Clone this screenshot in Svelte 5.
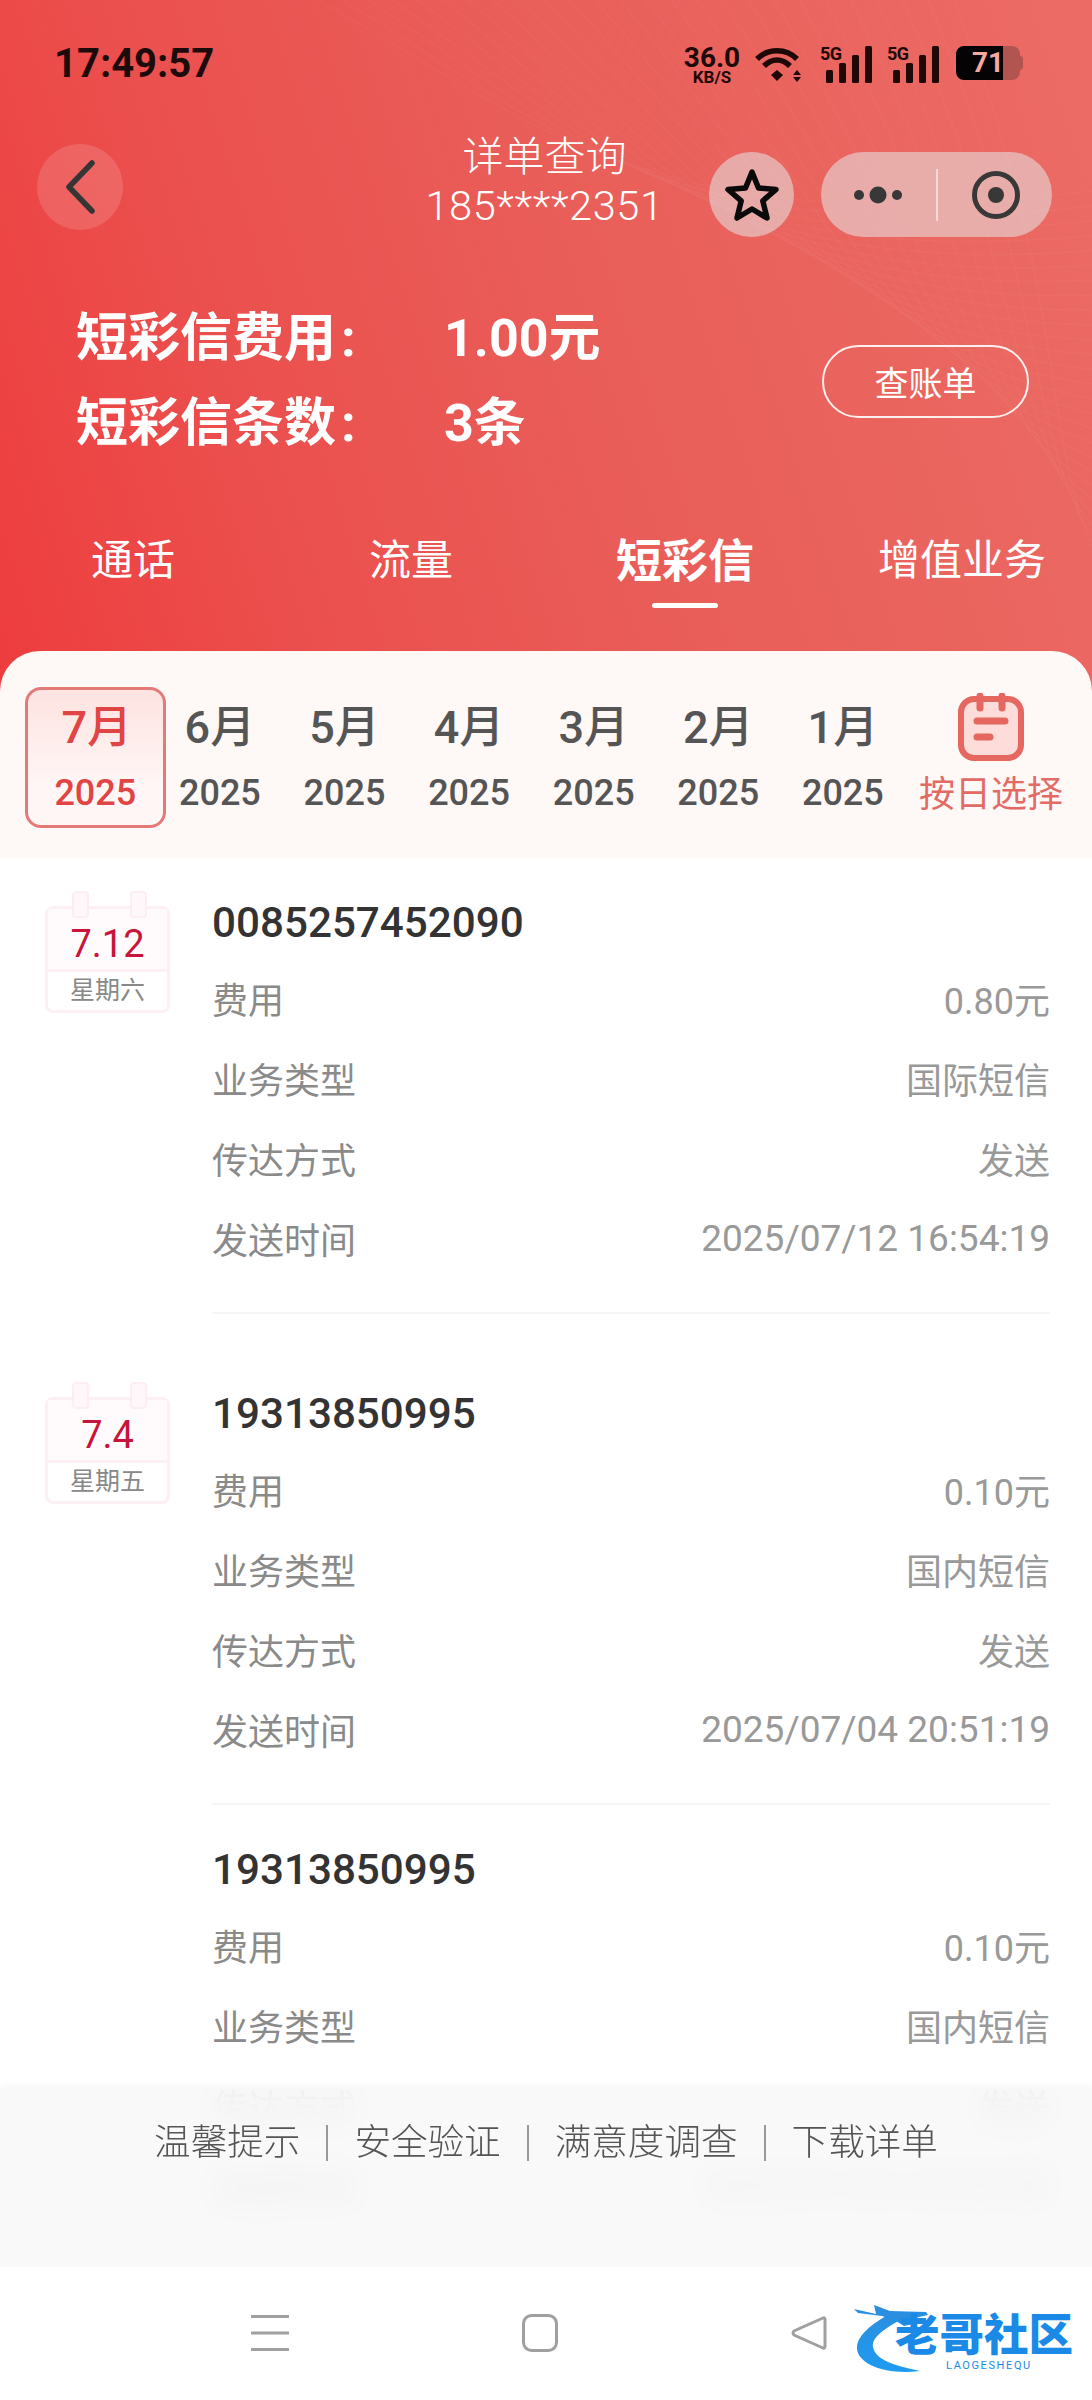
<script>
  const tabs = ['通话', '流量', '短彩信', '增值业务'];
  const months = ['7月', '6月', '5月', '4月', '3月', '2月', '1月'];
  const records = [
    { date: '7.12', week: '星期六', no: '0085257452090', fee: '0.80元', type: '国际短信', time: '2025/07/12 16:54:19', cls: 'first' },
    { date: '7.4', week: '星期五', no: '19313850995', fee: '0.10元', type: '国内短信', time: '2025/07/04 20:51:19', cls: 'second' },
    { no: '19313850995', fee: '0.10元', type: '国内短信', time: '2025/07/04 20:50:58', cls: 'third' }
  ];
  const links = ['温馨提示', '安全验证', '满意度调查', '下载详单'];
  const waves = Array.from({ length: 26 }, (_, i) => i);
</script>

<div class="page">
  <header class="hero">
    <svg class="waves" viewBox="0 0 1092 700" preserveAspectRatio="none" aria-hidden="true">
      {#each waves as i}
        <path d={`M${300 + i * 26} -10 C ${520 + i * 22} ${110 + i * 7}, ${640 + i * 16} ${250 + i * 8}, 1100 ${190 + i * 15}`} />
      {/each}
    </svg>

    <div class="status">
      <span class="clock">17:49:57</span>
      <div class="status-icons">
        <div class="speed"><b>36.0</b><small>KB/S</small></div>
        <svg class="wifi" viewBox="0 0 50 36" aria-hidden="true">
          <path d="M2 13 C13 2 31 2 42 13" />
          <path d="M9 20 C17 12 27 12 35 20" />
          <path d="M22 24 l6 5 l-6 6 l-6 -6 z" class="solid" />
          <path d="M42 24 l4 5 h-8 z M42 36 l4 -5 h-8 z" class="solid" />
        </svg>
        <div class="signal"><i>5G</i><svg viewBox="0 0 46 37" aria-hidden="true"><rect x="0" y="24" width="7" height="13" rx="1.5"/><rect x="13" y="17" width="7" height="20" rx="1.5"/><rect x="26" y="9" width="7" height="28" rx="1.5"/><rect x="39" y="0" width="7" height="37" rx="1.5"/></svg></div>
        <div class="signal"><i>5G</i><svg viewBox="0 0 46 37" aria-hidden="true"><rect x="0" y="24" width="7" height="13" rx="1.5"/><rect x="13" y="17" width="7" height="20" rx="1.5"/><rect x="26" y="9" width="7" height="28" rx="1.5"/><rect x="39" y="0" width="7" height="37" rx="1.5"/></svg></div>
        <div class="battery"><span>71</span></div>
      </div>
    </div>

    <nav class="bar">
      <button class="back" aria-label="返回">
        <svg viewBox="0 0 30 54" aria-hidden="true"><path d="M27 3 L4 27 L27 51" /></svg>
      </button>
      <div class="title">
        <div>详单查询</div>
        <div class="phone">185****2351</div>
      </div>
      <div class="actions">
        <button class="star" aria-label="收藏">
          <svg viewBox="0 0 56 54" aria-hidden="true"><path d="M28 4 L34.5 20 L52 21.5 L38.8 32.8 L43 50 L28 41 L13 50 L17.2 32.8 L4 21.5 L21.5 20 Z" /></svg>
        </button>
        <div class="capsule">
          <svg class="dots" viewBox="0 0 50 20" aria-hidden="true"><circle cx="5" cy="10" r="5"/><circle cx="24" cy="10" r="8.5"/><circle cx="43" cy="10" r="5"/></svg>
          <span class="sep"></span>
          <svg class="target" viewBox="0 0 48 48" aria-hidden="true"><circle cx="24" cy="24" r="21.5" class="ring"/><circle cx="24" cy="24" r="8"/></svg>
        </div>
      </div>
    </nav>

    <section class="summary">
      <div>
        <div class="sum-row"><span>短彩信费用<i>:</i></span><strong>1.00元</strong></div>
        <div class="sum-row"><span>短彩信条数<i>:</i></span><strong>3条</strong></div>
      </div>
      <button class="bill">查账单</button>
    </section>

    <div class="tabs">
      {#each tabs as t, i}
        <div class="tab t{i}" class:active={i === 2}>{t}{#if i === 2}<span class="line"></span>{/if}</div>
      {/each}
    </div>
  </header>

  <section class="strip">
    {#each months as m, i}
      <div class="month" class:on={i === 0}>
        <span class="m">{m}</span>
        <span class="y">2025</span>
      </div>
    {/each}
    <div class="pick">
      <svg viewBox="0 0 66 68" aria-hidden="true">
        <rect x="3" y="6" width="60" height="59" rx="13" class="body" />
        <path d="M22 3 V15 M44 3 V15 M19 28 H47 M19 44 H32" />
      </svg>
      <span>按日选择</span>
    </div>
  </section>

  <main class="main">
    {#each records as r}
      <article class="record {r.cls}">
        <div class="side">
          {#if r.date}
            <div class="cal">
              <span class="pin left"></span><span class="pin right"></span>
              <div class="d">{r.date}</div>
              <div class="w">{r.week}</div>
            </div>
          {/if}
        </div>
        <div class="info">
          <h3>{r.no}</h3>
          <div class="row"><span>费用</span><span class="v">{r.fee}</span></div>
          <div class="row"><span>业务类型</span><span class="v">{r.type}</span></div>
          <div class="row"><span>传达方式</span><span class="v">发送</span></div>
          <div class="row"><span>发送时间</span><span class="v time">{r.time}</span></div>
        </div>
      </article>
    {/each}

    <footer class="foot">
      {#each links as l, i}
        {#if i > 0}<span class="bar-sep"></span>{/if}
        <span>{l}</span>
      {/each}
    </footer>
  </main>

  <div class="sysnav">
    <svg class="s-menu" viewBox="0 0 38 36" aria-hidden="true"><path d="M0 1.5 H38 M0 18 H38 M0 34.5 H38" /></svg>
    <svg class="s-home" viewBox="0 0 36 38" aria-hidden="true"><rect x="1.5" y="1.5" width="33" height="35" rx="8" /></svg>
    <svg class="s-back" viewBox="0 0 36 36" aria-hidden="true"><path d="M32 3 Q34 2 34 5 V31 Q34 34 32 33 L3 20 Q1 18 3 16 Z" /></svg>
    <div class="logo">
      <svg viewBox="0 0 220 68" aria-hidden="true">
        <defs><linearGradient id="lg" x1="0" y1="0" x2="0" y2="1"><stop offset="0" stop-color="#2a8fe0"/><stop offset="1" stop-color="#1e9bf0"/></linearGradient></defs>
        <path d="M34 10 C12 22 2 34 3 44 C5 60 32 70 66 66 C50 62 22 58 19 42 C17 33 30 24 46 15 Z" fill="url(#lg)" />
        <path d="M0 4 L22 9 L20 0 L36 6 L72 7 L74 10 L56 14 L70 17 L50 21 L42 16 L28 11 L4 8 Z" fill="#2a8fe0" />
      </svg>
      <b>老哥社区</b>
      <small>LAOGESHEQU</small>
    </div>
  </div>
</div>

<style>
  :global(body) { margin: 0; background: #fff; }
  .page {
    width: 1092px; height: 2400px; overflow: hidden; position: relative;
    font-family: Roboto, "Noto Sans CJK SC", sans-serif;
  }
  button { border: 0; padding: 0; background: none; font: inherit; color: inherit; }

  .hero {
    height: 700px; position: relative; color: #fff; box-sizing: border-box;
    background: linear-gradient(72deg, #ee3c3d 0%, #eb4f4d 24%, #e95e59 55%, #ec6c65 100%);
  }
  .waves { position: absolute; inset: 0; width: 100%; height: 100%; }
  .waves path { fill: none; stroke: rgba(255,255,255,.03); stroke-width: 1.5; }
  .status, .bar, .summary, .tabs { position: relative; }

  .status { height: 130px; display: flex; justify-content: space-between; padding: 43px 72px 0 54px; box-sizing: border-box; align-items: flex-start; }
  .clock { font-size: 40px; font-weight: 700; color: #1d0a0a; line-height: 42px; }
  .status-icons { display: flex; align-items: flex-start; color: #1f0808; padding-top: 3px; }
  .speed { width: 60px; display: flex; flex-direction: column; align-items: center; }
  .speed b { font-size: 28px; line-height: 24px; font-weight: 700; }
  .speed small { font-size: 17px; line-height: 14px; font-weight: 700; }
  .wifi { width: 50px; height: 36px; margin-left: 13px; }
  .wifi path { fill: none; stroke: #1f0808; stroke-width: 5.5; }
  .wifi path.solid { fill: #1f0808; stroke: none; }
  .signal { width: 52px; height: 37px; margin-left: 15px; position: relative; }
  .signal svg { position: absolute; right: 0; top: 0; width: 46px; height: 37px; fill: #1f0808; }
  .signal i { position: absolute; left: 0; top: -2px; font-style: normal; font-size: 18px; font-weight: 700; line-height: 19px; letter-spacing: -.5px; z-index: 1; }
  .battery {
    width: 64px; height: 34px; margin-left: 17px; border-radius: 8px; position: relative;
    background: linear-gradient(90deg, #050303 0 74%, #b25450 74%);
    color: #f6a9a0; font-size: 28px; font-weight: 700; line-height: 34px; text-align: left;
  }
  .battery span { margin-left: 16px; }
  .battery::after { content: ""; position: absolute; right: -3px; top: 10px; width: 3px; height: 14px; background: #b25450; border-radius: 0 3px 3px 0; }

  .bar { display: grid; grid-template-columns: 1fr auto 1fr; align-items: start; height: 107px; padding: 0 40px 0 37px; }
  .back { width: 86px; height: 86px; border-radius: 50%; background: rgba(255,255,255,.14); margin-top: 14px; display: flex; align-items: center; justify-content: center; }
  .back svg { width: 30px; height: 54px; }
  .back path { fill: none; stroke: #353535; stroke-width: 5.5; stroke-linecap: round; stroke-linejoin: round; }
  .title { font-size: 41px; line-height: 50px; text-align: center; font-weight: 300; padding-top: 2px; }
  .phone { font-size: 41.5px; font-weight: 300; letter-spacing: .6px; margin-top: -1px; }
  .actions { display: flex; justify-content: flex-end; gap: 27px; margin-top: 22px; }
  .star { width: 85px; height: 85px; border-radius: 50%; background: rgba(230,230,230,.55); display: flex; align-items: center; justify-content: center; }
  .star svg { width: 56px; height: 54px; }
  .star path { fill: none; stroke: #0a0a0a; stroke-width: 5.5; stroke-linejoin: round; }
  .capsule { width: 231px; height: 85px; border-radius: 43px; background: rgba(230,230,230,.55); display: flex; align-items: center; position: relative; }
  .dots { width: 50px; height: 20px; margin-left: 33px; fill: #383838; }
  .sep { width: 1.5px; height: 52px; background: rgba(255,255,255,.55); margin-left: 32px; }
  .target { width: 48px; height: 48px; margin-left: 34px; fill: #383838; }
  .target .ring { fill: none; stroke: #383838; stroke-width: 5; }

  .summary { display: flex; justify-content: space-between; align-items: center; margin-top: 59px; padding: 0 63px 0 76px; }
  .sum-row { display: flex; height: 85px; align-items: center; font-size: 52px; font-weight: 700; line-height: 60px; }
  .sum-row span { width: 368px; }
  .sum-row i { font-style: normal; margin-left: 5px; }
  .sum-row strong { font-size: 52px; font-weight: 700; }
  .bill { width: 207px; height: 73px; border: 2px solid rgba(255,255,255,.9); border-radius: 37px; font-size: 34px; box-sizing: border-box; color: #fff; font-weight: 400; }

  .tabs { display: grid; grid-template-columns: 278px 278px 270px 284px; margin: 65px 0 0 -6px; width: 1110px; }
  .tab { text-align: center; font-size: 42px; line-height: 60px; position: relative; font-weight: 400; }
  .tab.active { font-size: 46px; font-weight: 700; }
  .line { position: absolute; left: 50%; margin-left: -33px; top: 72px; width: 66px; height: 5px; border-radius: 3px; background: #fff; }

  .strip {
    position: relative; margin-top: -49px; height: 207px; box-sizing: border-box;
    background: #fef8f7; border-radius: 40px 40px 0 0;
    display: grid; grid-template-columns: repeat(7, 124.6px) 1fr;
    padding: 36px 15px 0 33px; align-items: start; color: #555;
  }
  .month { height: 141px; display: flex; flex-direction: column; align-items: center; padding-top: 10px; box-sizing: border-box; border: 3px solid transparent; }
  .month.on {
    margin: 0 -8px; border: 3px solid #e37a78; border-radius: 16px;
    background: linear-gradient(180deg, #fde3e1, #fff6f5 70%); color: #e04443;
  }
  .m { font-size: 45px; line-height: 56px; font-weight: 500; }
  .on .m { padding-left: 3px; }
  .y { font-size: 36px; line-height: 46px; margin-top: 14px; font-weight: 500; }
  .pick { display: flex; flex-direction: column; align-items: center; color: #e26b65; font-size: 36px; }
  .pick svg { width: 66px; height: 68px; margin-top: 6px; }
  .pick path { fill: none; stroke: #e5675f; stroke-width: 7; stroke-linecap: round; }
  .pick .body { fill: #fddcda; stroke: #e5675f; stroke-width: 6; }
  .pick span { line-height: 46px; margin-top: 11px; }

  .main { position: relative; height: 1409px; overflow: hidden; background: #fff; }
  .record { display: grid; grid-template-columns: 212px 1fr; padding-right: 42px; }
  .first { padding-top: 35px; }
  .second { padding-top: 70px; }
  .third { padding-top: 35px; }
  .side { position: relative; }
  .cal {
    position: absolute; left: 45px; top: -3px; margin-top: 16px; width: 125px; height: 107px; box-sizing: border-box;
    border: 3px solid #fdf0f3; border-radius: 8px; text-align: center;
  }
  .pin { position: absolute; top: -18px; width: 17px; height: 27px; background: #fff7f9; border: 2px solid #fdeef1; border-radius: 4px; box-sizing: border-box; }
  .pin.left { left: 24px; }
  .pin.right { left: 82px; }
  .d { height: 60px; line-height: 71px; font-size: 38px; color: #c8143a; border-bottom: 3px solid #fdf0f3; background: #fffafb; }
  .w { font-size: 25px; line-height: 38px; color: #888; }
  .info { padding-bottom: 35px; }
  .second .info, .first .info { border-bottom: 2px solid #f5f5f5; padding-bottom: 34px; }
  h3 { margin: 0 0 5px; font-size: 42.2px; line-height: 60px; font-weight: 500; color: #333; }
  .row { display: flex; justify-content: space-between; align-items: center; height: 80px; font-size: 36px; color: #8a8a8a; }
  .v { font-size: 36px; color: #999; }
  .v.time { font-size: 37px; }

  .foot {
    position: absolute; left: 0; right: 0; bottom: 0; height: 179px; box-sizing: border-box;
    background: rgba(248,248,248,.86); backdrop-filter: blur(16px);
    box-shadow: 0 -3px 6px rgba(0,0,0,.03);
    display: flex; justify-content: center; align-items: flex-start; gap: 26px;
    padding-top: 29px; font-size: 36.6px; line-height: 52px; color: #555; font-weight: 300;
  }
  .bar-sep { width: 2px; height: 36px; background: #999; margin-top: 8px; }

  .sysnav { height: 133px; background: #fff; position: relative; }
  .sysnav svg { position: absolute; fill: none; stroke: #a0a0a0; stroke-width: 3; }
  .s-menu { left: 251px; top: 48px; width: 38px; height: 36px; }
  .s-home { left: 522px; top: 47px; width: 36px; height: 38px; }
  .s-back { left: 791px; top: 48px; width: 36px; height: 36px; }
  .logo { position: absolute; left: 854px; top: 38px; width: 220px; height: 68px; }
  .sysnav .logo svg { position: absolute; left: 0; top: 0; width: 220px; height: 68px; stroke: none; }
  .logo b { position: absolute; left: 41px; top: 8px; font-size: 44.5px; line-height: 46px; font-weight: 900; color: #1a8ae6; white-space: nowrap; }
  .logo small { position: absolute; left: 92px; top: 54px; font-size: 11px; line-height: 13px; letter-spacing: 1.6px; color: #1a8ae6; }
</style>
